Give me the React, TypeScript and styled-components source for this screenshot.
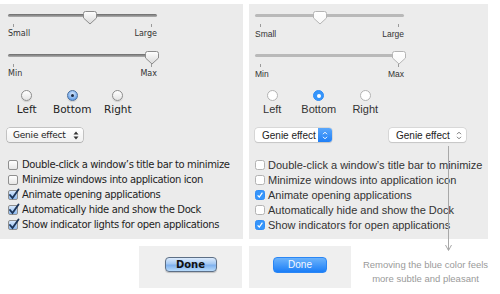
import styled, { createGlobalStyle } from 'styled-components';

type Kind = 'aqua' | 'flat';

const GlobalStyle = createGlobalStyle`
  html, body {
    margin: 0;
    padding: 0;
    background: #ffffff;
  }
  body {
    width: 500px;
    height: 294px;
    overflow: hidden;
  }
`;

const Page = styled.div`
  position: relative;
  width: 500px;
  height: 294px;
  padding-top: 4px;
  box-sizing: border-box;
`;

const TopRow = styled.div`
  display: flex;
  gap: 6px;
`;

const Panel = styled.div<{ $kind: Kind }>`
  box-sizing: border-box;
  width: ${(p) => (p.$kind === 'aqua' ? 243 : 239)}px;
  height: 235px;
  background: ${(p) => (p.$kind === 'aqua' ? '#ebebeb' : '#ececec')};
  padding: 5px 0 0 ${(p) => (p.$kind === 'aqua' ? 8 : 6)}px;
  font-family: ${(p) =>
    p.$kind === 'aqua' ? '"DejaVu Sans", Verdana, sans-serif' : '"Liberation Sans", Arial, sans-serif'};
  color: #1e1e1e;
  display: flex;
  flex-direction: column;
`;

/* ---------- slider ---------- */

const SliderBlock = styled.div`
  width: 149px;
  & + & {
    margin-top: 10px;
  }
`;

const SliderArea = styled.div`
  position: relative;
  box-sizing: border-box;
  height: 14px;
  padding-top: 5px;
`;

const Track = styled.div<{ $kind: Kind }>`
  height: 3px;
  border-radius: 2px;
  background: ${(p) =>
    p.$kind === 'aqua' ? 'linear-gradient(#6a6a6a, #b0b0b0)' : '#b9b9b9'};
`;

const ThumbSvg = styled.svg`
  position: absolute;
  top: 2px;
  margin-left: -7px;
`;

const Ticks = styled.div`
  display: flex;
  justify-content: space-between;
  box-sizing: border-box;
  height: 6px;
  padding: 1px 5px 0;
`;

const Tick = styled.span`
  width: 1px;
  height: 3px;
  background: #9a9a9a;
`;

const SliderLabels = styled.div<{ $kind: Kind }>`
  display: flex;
  justify-content: space-between;
  height: 10px;
  font-size: ${(p) => (p.$kind === 'aqua' ? 8 : 8.5)}px;
  line-height: 10px;
  color: #333;
`;

const Thumb = ({ kind, left }: { kind: Kind; left: number }) => (
  <ThumbSvg width="14" height="14" viewBox="0 0 14 14" style={{ left }}>
    <defs>
      <linearGradient id={`thumb-${kind}`} x1="0" y1="0" x2="0" y2="1">
        <stop offset="0" stopColor="#ffffff" />
        <stop offset="1" stopColor={kind === 'aqua' ? '#d9d9d9' : '#f7f7f7'} />
      </linearGradient>
    </defs>
    <path
      d="M2.5 0.5 H11.5 Q13.5 0.5 13.5 2.5 V7 L7 13 L0.5 7 V2.5 Q0.5 0.5 2.5 0.5 Z"
      fill={`url(#thumb-${kind})`}
      stroke={kind === 'aqua' ? '#8c8c8c' : '#b4b4b4'}
      strokeWidth="1"
    />
  </ThumbSvg>
);

const Slider = ({ kind, value, min, max }: { kind: Kind; value: number; min: string; max: string }) => (
  <SliderBlock>
    <SliderArea>
      <Track $kind={kind} />
      <Thumb kind={kind} left={5 + value * 139} />
    </SliderArea>
    <Ticks>
      <Tick />
      <Tick />
    </Ticks>
    <SliderLabels $kind={kind}>
      <span>{min}</span>
      <span>{max}</span>
    </SliderLabels>
  </SliderBlock>
);

/* ---------- radios ---------- */

const RadioGroup = styled.div<{ $shift: number }>`
  display: flex;
  margin: 11px 0 0 ${(p) => -p.$shift}px;
`;

const RadioItem = styled.div<{ $kind: Kind }>`
  width: ${(p) => (p.$kind === 'aqua' ? 45.5 : 46.5)}px;
  display: flex;
  flex-direction: column;
  align-items: center;
  gap: 3px;
  font-size: ${(p) => (p.$kind === 'aqua' ? 10.5 : 11)}px;
  line-height: 11px;
  color: ${(p) => (p.$kind === 'aqua' ? '#222' : '#333')};
`;

const RadioCircle = styled.span<{ $kind: Kind; $on: boolean }>`
  box-sizing: border-box;
  width: 11px;
  height: 11px;
  border-radius: 50%;
  display: flex;
  align-items: center;
  justify-content: center;
  border: 1px solid
    ${(p) => (p.$on ? (p.$kind === 'aqua' ? '#4a6f9e' : '#2f8cf6') : p.$kind === 'aqua' ? '#8d8d8d' : '#b3b3b3')};
  background: ${(p) =>
    p.$on
      ? p.$kind === 'aqua'
        ? 'radial-gradient(circle at 50% 35%, #dbeafc, #6fa6ea 70%, #4a84d6)'
        : '#3595fb'
      : p.$kind === 'aqua'
      ? 'linear-gradient(#ffffff, #e4e4e4)'
      : '#ffffff'};
  box-shadow: ${(p) => (p.$kind === 'aqua' ? '0 1px 1px rgba(0,0,0,0.12)' : 'none')};
`;

const RadioDot = styled.span<{ $kind: Kind }>`
  width: ${(p) => (p.$kind === 'aqua' ? 3 : 4)}px;
  height: ${(p) => (p.$kind === 'aqua' ? 3 : 4)}px;
  border-radius: 50%;
  background: ${(p) => (p.$kind === 'aqua' ? '#1b2b44' : '#ffffff')};
`;

const Radios = ({ kind, shift }: { kind: Kind; shift: number }) => (
  <RadioGroup $shift={shift}>
    {['Left', 'Bottom', 'Right'].map((label) => (
      <RadioItem key={label} $kind={kind}>
        <RadioCircle $kind={kind} $on={label === 'Bottom'}>
          {label === 'Bottom' && <RadioDot $kind={kind} />}
        </RadioCircle>
        {label}
      </RadioItem>
    ))}
  </RadioGroup>
);

/* ---------- popups ---------- */

const PopupRow = styled.div`
  display: flex;
  gap: 57px;
  margin-top: 13px;
`;

const Popup = styled.div<{ $kind: Kind }>`
  box-sizing: border-box;
  height: 14px;
  width: ${(p) => (p.$kind === 'aqua' ? 76 : 77)}px;
  margin-left: ${(p) => (p.$kind === 'aqua' ? -1 : 0)}px;
  display: flex;
  align-items: center;
  border-radius: 3px;
  overflow: hidden;
  background: ${(p) => (p.$kind === 'aqua' ? 'linear-gradient(#ffffff, #f0f0f0)' : '#ffffff')};
  box-shadow: 0 0 0 0.5px ${(p) => (p.$kind === 'aqua' ? '#9b9b9b' : '#c4c4c4')},
    0 1px 1px rgba(0, 0, 0, 0.15);
  font-size: ${(p) => (p.$kind === 'aqua' ? 9 : 10)}px;
  letter-spacing: ${(p) => (p.$kind === 'aqua' ? '-0.2px' : '0')};
  color: #222;
`;

const PopupText = styled.span<{ $kind: Kind }>`
  flex: 1;
  padding-left: ${(p) => (p.$kind === 'aqua' ? 6 : 7)}px;
  white-space: nowrap;
`;

const PopupStepper = styled.span<{ $blue: boolean }>`
  flex: none;
  width: 14px;
  height: 100%;
  display: flex;
  align-items: center;
  justify-content: center;
  background: ${(p) => (p.$blue ? 'linear-gradient(#5aa7fb, #1f7ff6)' : 'transparent')};
`;

const Chevrons = ({ color, filled }: { color: string; filled?: boolean }) =>
  filled ? (
    <svg width="6" height="9" viewBox="0 0 6 9">
      <path d="M3 0.5 L5.5 3.5 H0.5 Z M3 8.5 L5.5 5.5 H0.5 Z" fill={color} />
    </svg>
  ) : (
    <svg width="6" height="9" viewBox="0 0 6 9">
      <path d="M1 3.2 L3 1.2 L5 3.2 M1 5.8 L3 7.8 L5 5.8" fill="none" stroke={color} strokeWidth="1" />
    </svg>
  );

/* ---------- checkboxes ---------- */

const CheckList = styled.div`
  margin-top: 15px;
  display: flex;
  flex-direction: column;
`;

const CheckRow = styled.div<{ $kind: Kind }>`
  display: flex;
  align-items: center;
  gap: ${(p) => (p.$kind === 'aqua' ? 4 : 3)}px;
  height: 15px;
  font-size: ${(p) => (p.$kind === 'aqua' ? 10 : 11)}px;
  letter-spacing: ${(p) => (p.$kind === 'aqua' ? '-0.38px' : '0')};
  white-space: nowrap;
  color: ${(p) => (p.$kind === 'aqua' ? '#1e1e1e' : '#333')};
`;

const Box = styled.span<{ $kind: Kind; $on: boolean }>`
  position: relative;
  box-sizing: border-box;
  flex: none;
  width: 10px;
  height: 10px;
  border-radius: ${(p) => (p.$kind === 'aqua' ? 2 : 2.5)}px;
  border: 1px solid
    ${(p) => (p.$kind === 'aqua' ? '#8f8f8f' : p.$on ? '#2f8cf6' : '#b3b3b3')};
  background: ${(p) =>
    p.$kind === 'aqua'
      ? p.$on
        ? 'linear-gradient(#d6e7fb, #8dbaf0)'
        : 'linear-gradient(#ffffff, #e6e6e6)'
      : p.$on
      ? '#3595fb'
      : '#ffffff'};
`;

const CheckMark = styled.svg`
  position: absolute;
  left: -1px;
  top: -3px;
`;

const Checkbox = ({ kind, on }: { kind: Kind; on: boolean }) => (
  <Box $kind={kind} $on={on}>
    {on &&
      (kind === 'aqua' ? (
        <CheckMark width="12" height="12" viewBox="0 0 12 12">
          <path d="M2 7 L4.5 10 L10.5 1.5" fill="none" stroke="#1c3559" strokeWidth="1.9" strokeLinecap="round" />
        </CheckMark>
      ) : (
        <CheckMark width="10" height="12" viewBox="0 0 10 12">
          <path d="M2.6 7.3 L4.3 9 L7.4 4.6" fill="none" stroke="#ffffff" strokeWidth="1.2" />
        </CheckMark>
      ))}
  </Box>
);

/* ---------- bottom ---------- */

const BottomRow = styled.div`
  display: flex;
  margin-top: 7px;
  padding-left: 139px;
`;

const DonePanel = styled.div<{ $w: number; $gap?: number }>`
  width: ${(p) => p.$w}px;
  height: 42px;
  margin-left: ${(p) => p.$gap || 0}px;
  background: #efefef;
  display: flex;
  align-items: center;
  justify-content: center;
  padding-bottom: 5px;
  box-sizing: border-box;
`;

const DoneButton = styled.button<{ $kind: Kind }>`
  box-sizing: border-box;
  width: ${(p) => (p.$kind === 'aqua' ? 52 : 54)}px;
  height: ${(p) => (p.$kind === 'aqua' ? 15 : 16)}px;
  padding: 0;
  border-radius: 4px;
  font-size: 10px;
  line-height: 12px;
  font-family: ${(p) =>
    p.$kind === 'aqua' ? '"DejaVu Sans", Verdana, sans-serif' : '"Liberation Sans", Arial, sans-serif'};
  font-weight: ${(p) => (p.$kind === 'aqua' ? 700 : 400)};
  color: ${(p) => (p.$kind === 'aqua' ? '#111' : '#f4f8ff')};
  border: 1px solid ${(p) => (p.$kind === 'aqua' ? '#5d6f86' : '#2a86f5')};
  background: ${(p) =>
    p.$kind === 'aqua'
      ? 'linear-gradient(#dcebfc 0%, #a5c9f3 45%, #7fb1ee 55%, #b8dbfb 100%)'
      : 'linear-gradient(#6cb3fb, #1b7ef7)'};
  box-shadow: ${(p) => (p.$kind === 'aqua' ? '0 1px 1px rgba(0,0,0,0.2)' : 'none')};
`;

const Caption = styled.div`
  flex: 1;
  margin-top: 12px;
  text-align: center;
  font-family: 'Liberation Sans', Arial, sans-serif;
  font-size: 9.5px;
  line-height: 14px;
  color: #9a9a9a;
`;

const ArrowOverlay = styled.svg`
  position: absolute;
  left: 444px;
  top: 146px;
`;

const items = [
  'Double-click a window\u2019s title bar to minimize',
  'Minimize windows into application icon',
  'Animate opening applications',
  'Automatically hide and show the Dock',
];

const App = () => {
  const leftChecked = [false, false, true, true, true];
  const rightChecked = [false, false, true, false, true];

  return (
    <Page>
      <GlobalStyle />
      <TopRow>
        <Panel $kind="aqua">
          <Slider kind="aqua" value={0.554} min="Small" max="Large" />
          <Slider kind="aqua" value={1} min="Min" max="Max" />
          <Radios kind="aqua" shift={4} />
          <PopupRow>
            <Popup $kind="aqua">
              <PopupText $kind="aqua">Genie effect</PopupText>
              <PopupStepper $blue={false}>
                <Chevrons color="#333" filled />
              </PopupStepper>
            </Popup>
          </PopupRow>
          <CheckList>
            {[...items, 'Show indicator lights for open applications'].map((t, i) => (
              <CheckRow key={t} $kind="aqua">
                <Checkbox kind="aqua" on={leftChecked[i]} />
                {t}
              </CheckRow>
            ))}
          </CheckList>
        </Panel>

        <Panel $kind="flat">
          <Slider kind="flat" value={0.432} min="Small" max="Large" />
          <Slider kind="flat" value={1} min="Min" max="Max" />
          <Radios kind="flat" shift={6} />
          <PopupRow>
            <Popup $kind="flat">
              <PopupText $kind="flat">Genie effect</PopupText>
              <PopupStepper $blue>
                <Chevrons color="#ffffff" />
              </PopupStepper>
            </Popup>
            <Popup $kind="flat">
              <PopupText $kind="flat">Genie effect</PopupText>
              <PopupStepper $blue={false}>
                <Chevrons color="#777" />
              </PopupStepper>
            </Popup>
          </PopupRow>
          <CheckList>
            {[...items, 'Show indicators for open applications'].map((t, i) => (
              <CheckRow key={t} $kind="flat">
                <Checkbox kind="flat" on={rightChecked[i]} />
                {t}
              </CheckRow>
            ))}
          </CheckList>
        </Panel>
      </TopRow>

      <BottomRow>
        <DonePanel $w={103}>
          <DoneButton $kind="aqua">Done</DoneButton>
        </DonePanel>
        <DonePanel $w={102} $gap={7}>
          <DoneButton $kind="flat">Done</DoneButton>
        </DonePanel>
        <Caption>
          Removing the blue color feels
          <br />
          more subtle and pleasant
        </Caption>
      </BottomRow>

      <ArrowOverlay width="9" height="106" viewBox="0 0 9 106">
        <line x1="4.5" y1="0" x2="4.5" y2="104" stroke="#a8a8a8" strokeWidth="1" />
        <path d="M1.5 99 L4.5 104.5 L7.5 99" fill="none" stroke="#a8a8a8" strokeWidth="1" />
      </ArrowOverlay>
    </Page>
  );
};

export default App;
